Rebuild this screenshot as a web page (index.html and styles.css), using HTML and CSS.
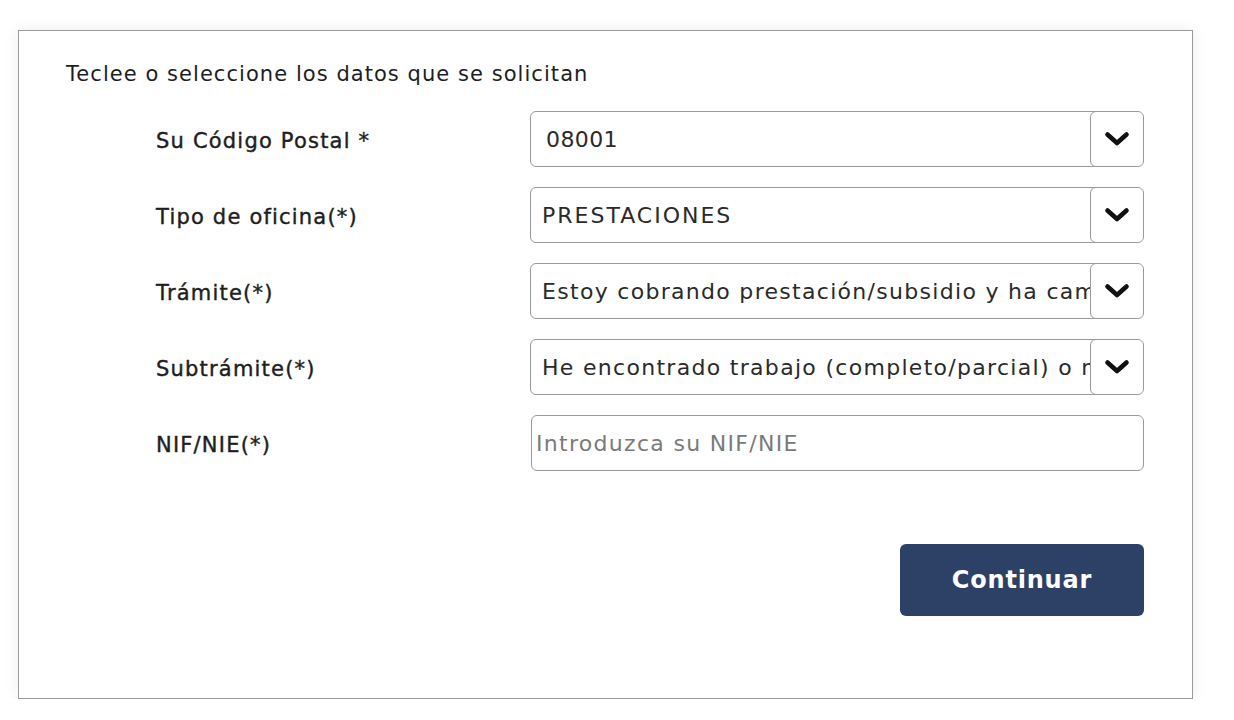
FILE: index.html
```html
<!DOCTYPE html>
<html lang="es">
<head>
<meta charset="utf-8">
<title>Cita previa</title>
<link rel="stylesheet" href="styles.css">
</head>
<body>
<div class="card">
  <p class="intro">Teclee o seleccione los datos que se solicitan</p>
  <div class="form">
    <div class="row">
      <label class="label">Su Código Postal *</label>
      <div class="select">
        <span class="value cp">08001</span>
        <span class="btn-drop"><svg width="26" height="16" viewBox="0 0 26 16"><polyline points="3.5,3.5 13,12 22.5,3.5" fill="none" stroke="#111" stroke-width="4.6" stroke-linecap="round" stroke-linejoin="round"/></svg></span>
      </div>
    </div>
    <div class="row">
      <label class="label">Tipo de oficina(*)</label>
      <div class="select">
        <span class="value caps">PRESTACIONES</span>
        <span class="btn-drop"><svg width="26" height="16" viewBox="0 0 26 16"><polyline points="3.5,3.5 13,12 22.5,3.5" fill="none" stroke="#111" stroke-width="4.6" stroke-linecap="round" stroke-linejoin="round"/></svg></span>
      </div>
    </div>
    <div class="row">
      <label class="label">Trámite(*)</label>
      <div class="select">
        <span class="value">Estoy cobrando prestación/subsidio y ha cambiado mi situación</span>
        <span class="btn-drop"><svg width="26" height="16" viewBox="0 0 26 16"><polyline points="3.5,3.5 13,12 22.5,3.5" fill="none" stroke="#111" stroke-width="4.6" stroke-linecap="round" stroke-linejoin="round"/></svg></span>
      </div>
    </div>
    <div class="row">
      <label class="label">Subtrámite(*)</label>
      <div class="select">
        <span class="value">He encontrado trabajo (completo/parcial) o me he dado de alta como autónomo</span>
        <span class="btn-drop"><svg width="26" height="16" viewBox="0 0 26 16"><polyline points="3.5,3.5 13,12 22.5,3.5" fill="none" stroke="#111" stroke-width="4.6" stroke-linecap="round" stroke-linejoin="round"/></svg></span>
      </div>
    </div>
    <div class="row">
      <label class="label">NIF/NIE(*)</label>
      <div class="text-input"><span class="placeholder">Introduzca su NIF/NIE</span></div>
    </div>
  </div>
  <div class="actions">
    <button class="continue">Continuar</button>
  </div>
</div>
</body>
</html>
```

FILE: styles.css
```css
html, body {
  margin: 0;
  padding: 0;
  background: #ffffff;
}
body {
  font-family: "DejaVu Sans", "Open Sans", sans-serif;
  color: #222222;
  padding: 30px 0 0 18px;
}
.card {
  box-sizing: border-box;
  width: 1175px;
  height: 669px;
  border: 1px solid #9a9a9a;
  background: #fff;
  box-shadow: 0 0 14px rgba(0,0,0,0.08);
  padding: 28px 47px 0 47px;
}
.intro {
  margin: 0;
  font-size: 21px;
  letter-spacing: 1.05px;
  line-height: 30px;
  color: #1e1e1e;
}
.form {
  margin-top: 22px;
  margin-left: 90px;
  display: flex;
  flex-direction: column;
  gap: 20px;
}
.row {
  display: grid;
  grid-template-columns: 374px 614px;
  align-items: center;
}
.label {
  font-size: 21px;
  letter-spacing: 1.2px;
  padding-top: 4px;
  color: #1e1e1e;
  -webkit-text-stroke: 0.4px #1e1e1e;
}
.select {
  height: 56px;
  box-sizing: border-box;
  border: 1px solid #9a9a9a;
  border-radius: 6px;
  display: flex;
  align-items: center;
  overflow: hidden;
}
.value {
  flex: 1;
  min-width: 0;
  white-space: nowrap;
  overflow: hidden;
  font-size: 22px;
  letter-spacing: 1.3px;
  color: #2a2a2a;
  padding-left: 11px;
}
.value.cp { padding-left: 15px; letter-spacing: 0.4px; }
.value.caps { letter-spacing: 2px; }
.btn-drop {
  flex: 0 0 auto;
  width: 54px;
  height: 56px;
  margin: -1px -1px -1px 0;
  box-sizing: border-box;
  border: 1px solid #9a9a9a;
  border-radius: 6px;
  background: #fff;
  display: flex;
  align-items: center;
  justify-content: center;
}
.text-input {
  height: 56px;
  margin-left: 1px;
  box-sizing: border-box;
  border: 1px solid #9a9a9a;
  border-radius: 6px;
  display: flex;
  align-items: center;
  padding-left: 4px;
}
.placeholder {
  font-size: 22px;
  letter-spacing: 1.3px;
  color: #7a7a7a;
}
.actions {
  display: flex;
  justify-content: flex-end;
  margin-top: 73px;
  padding-right: 1px;
}
.continue {
  width: 244px;
  height: 72px;
  border: none;
  border-radius: 6px;
  background: #2d4066;
  color: #fff;
  font-family: "DejaVu Sans", sans-serif;
  font-size: 24px;
  letter-spacing: 0.8px;
  font-weight: 700;
  cursor: pointer;
}
```
